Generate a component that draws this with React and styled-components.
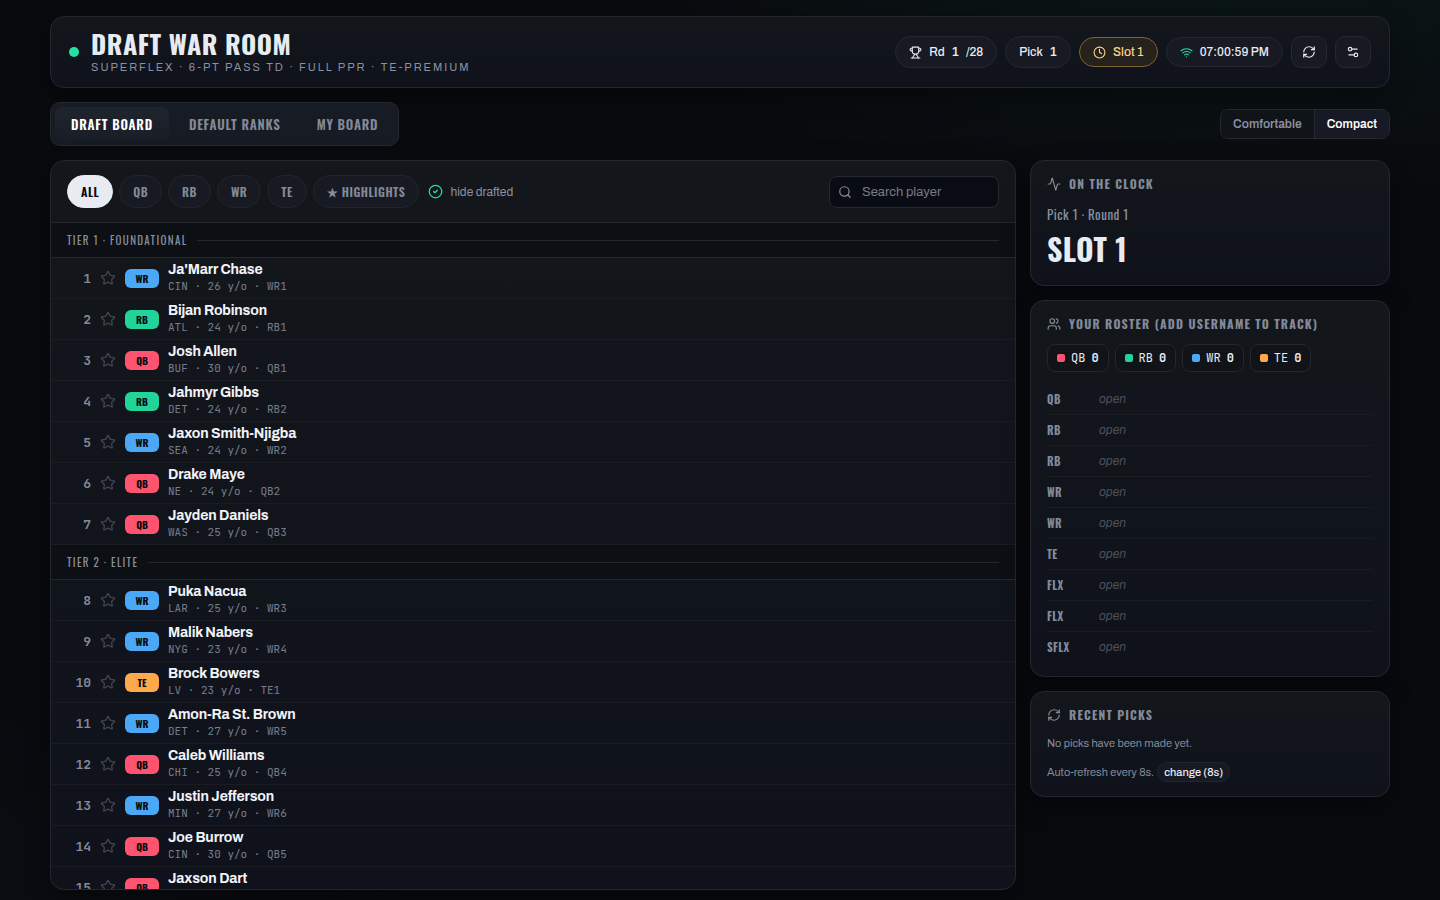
import React from "react";
import styled, { createGlobalStyle } from "styled-components";
import { Trophy, Clock, Wifi, RefreshCw, Settings2, CircleCheck, Search, Activity, Users, Star } from "lucide-react";

const display = '"Oswald", "Roboto Condensed", "Liberation Sans Narrow", sans-serif';
const body = '"Archivo", "Liberation Sans", sans-serif';
const mono = '"JetBrains Mono", "Liberation Mono", monospace';

const colors = { QB: "#ff5470", RB: "#22d39a", WR: "#4aa8f7", TE: "#ffa94d" };

const GlobalStyle = createGlobalStyle`
  * { box-sizing: border-box; }
  html { background: #090a0e; }
  body {
    margin: 0;
    min-height: 100vh;
    color: #e8ebf2;
    font-family: ${body};
    font-size: 14px;
    background:
      radial-gradient(1100px 500px at 85% -10%, rgba(34, 211, 154, 0.08), transparent 60%),
      radial-gradient(900px 500px at -5% 110%, rgba(34, 150, 180, 0.03), transparent 60%),
      #090a0e;
  }
  button, input { font: inherit; color: inherit; }
  button { cursor: pointer; }
  h1, h2, p, ul { margin: 0; padding: 0; }
  ul { list-style: none; }
`;

const Page = styled.div`
  display: flex;
  flex-direction: column;
  gap: 14px;
  padding: 16px 50px 10px;
`;

const Panel = styled.section`
  border: 1px solid #24282e;
  border-radius: 14px;
  background: linear-gradient(180deg, #13171b, #0f121b);
  box-shadow: 0 8px 24px rgba(0, 0, 0, 0.4);
`;

const Header = styled(Panel).attrs({ as: "header" })`
  display: flex;
  align-items: center;
  justify-content: space-between;
  height: 72px;
  padding: 0 18px;
`;

const Brand = styled.div`
  display: flex;
  align-items: center;
  gap: 12px;
`;

const Dot = styled.span`
  width: 10px;
  height: 10px;
  border-radius: 50%;
  background: #27e0a3;
`;

const Title = styled.h1`
  font: 700 26px/30px ${display};
  letter-spacing: 0.02em;
`;

const Subtitle = styled.p`
  font-size: 11px;
  line-height: 16px;
  letter-spacing: 0.18em;
  color: #8a90a0;
`;

const Row = styled.div`
  display: flex;
  align-items: center;
  gap: 8px;
`;

const Chip = styled.span`
  display: flex;
  align-items: center;
  gap: 7px;
  height: ${(p) => (p.$tall ? 32 : 30)}px;
  padding: 0 13px;
  border: 1px solid ${(p) => (p.$gold ? "#80652f" : "#24272f")};
  border-radius: 16px;
  background: ${(p) => (p.$gold ? "#25211c" : "#171a23")};
  color: ${(p) => (p.$gold ? "#ffd58a" : "#e8ebf2")};
  font-size: 12px;
  font-weight: 500;
  white-space: nowrap;
  b { font: 700 12px/16px ${mono}; }
`;

const IconButton = styled.button`
  display: grid;
  place-items: center;
  width: 36px;
  height: 32px;
  padding: 0;
  border: 1px solid #24272f;
  border-radius: 10px;
  background: #171a23;
`;

const Bar = styled.div`
  display: flex;
  align-items: center;
  justify-content: space-between;
`;

const Tabs = styled.nav`
  display: flex;
  gap: 4px;
  height: 44px;
  padding: 4px;
  border: 1px solid #24282f;
  border-radius: 10px;
  background: #171b24;
`;

const Tab = styled.button`
  padding: 0 16px;
  border: 0;
  border-radius: 8px;
  background: ${(p) => (p.$active ? "linear-gradient(180deg, #20242e, #191d26)" : "none")};
  color: ${(p) => (p.$active ? "#ffffff" : "#848a99")};
  font: 600 13px/20px ${display};
  letter-spacing: 0.06em;
`;

const Segments = styled.div`
  display: flex;
  height: 30px;
  border: 1px solid #24282f;
  border-radius: 8px;
  overflow: hidden;
`;

const Segment = styled.button`
  padding: 0 12px;
  border: 0;
  background: ${(p) => (p.$active ? "#171a24" : "#101318")};
  color: ${(p) => (p.$active ? "#ffffff" : "#8a90a0")};
  font-size: 12px;
  font-weight: 600;
  & + & { border-left: 1px solid #24282f; }
`;

const Columns = styled.main`
  display: grid;
  grid-template-columns: minmax(0, 1fr) 360px;
  align-items: start;
  gap: 14px;
`;

const Board = styled(Panel)`
  display: flex;
  flex-direction: column;
  height: calc(100vh - 170px);
  overflow: hidden;
`;

const Toolbar = styled.div`
  display: flex;
  align-items: center;
  justify-content: space-between;
  flex: none;
  padding: 14px 16px;
  border-bottom: 1px solid #24282e;
`;

const Filters = styled.div`
  display: flex;
  align-items: center;
  gap: 6px;
`;

const Filter = styled.button`
  height: 33px;
  padding: 0 13px;
  border: 1px solid ${(p) => (p.$active ? "#e8ebf2" : "#22252e")};
  border-radius: 17px;
  background: ${(p) => (p.$active ? "#e8ebf2" : "#171a23")};
  color: ${(p) => (p.$active ? "#08090d" : "#848a99")};
  font: 600 12px/20px ${display};
  letter-spacing: 0.04em;
`;

const Toggle = styled.button`
  display: flex;
  align-items: center;
  gap: 7px;
  margin-left: 3px;
  padding: 0;
  border: 0;
  background: none;
  color: #8a90a0;
  font-size: 12px;
  svg { color: #27e0a3; }
`;

const SearchBox = styled.label`
  display: flex;
  align-items: center;
  gap: 10px;
  width: 170px;
  height: 32px;
  padding: 0 8px;
  border: 1px solid #24282f;
  border-radius: 8px;
  background: #090c12;
  color: #8a90a0;
  svg { flex: none; }
`;

const SearchInput = styled.input`
  width: 100%;
  min-width: 0;
  padding: 0;
  border: 0;
  outline: 0;
  background: none;
  font-size: 13px;
  &::placeholder { color: #767b86; opacity: 1; }
`;

const List = styled.div`
  flex: 1;
  min-height: 0;
  overflow-y: auto;
  scrollbar-width: none;
`;

const Tier = styled.h2`
  display: flex;
  align-items: center;
  gap: 10px;
  height: 35px;
  padding: 0 16px;
  border-bottom: 1px solid #24282e;
  background: #0c0f13;
  color: #8a90a0;
  font: 400 11px/18px ${display};
  letter-spacing: 0.12em;
  &::after {
    content: "";
    flex: 1;
    height: 1px;
    background: #24282e;
  }
`;

const Player = styled.li`
  display: grid;
  grid-template-columns: 24px 16px 34px minmax(0, 1fr);
  align-items: center;
  column-gap: 9px;
  height: 41px;
  padding: 0 16px;
  border-bottom: 1px solid #191d22;
`;

const Rank = styled.span`
  padding-top: 2px;
  color: #848a99;
  font: 600 13px/18px ${mono};
  text-align: right;
`;

const StarButton = styled.button`
  display: grid;
  padding: 0;
  border: 0;
  background: none;
  color: #40444e;
`;

const Badge = styled.span`
  height: 19px;
  border-radius: 6px;
  background: ${(p) => colors[p.$pos]};
  color: #08090d;
  font: 700 10px/19px ${display};
  text-align: center;
`;

const Name = styled.div`
  color: #f1f3f8;
  font-size: 14px;
  font-weight: 700;
  line-height: 16px;
  letter-spacing: -0.01em;
`;

const Meta = styled.div`
  color: #777d8b;
  font: 400 11px/16px ${mono};
`;

const Side = styled.aside`
  display: flex;
  flex-direction: column;
  gap: 14px;
`;

const Card = styled(Panel)`
  padding: 14px 16px;
`;

const CardTitle = styled.h2`
  display: flex;
  align-items: center;
  gap: 8px;
  color: #848a99;
  font: 700 12px/18px ${display};
  letter-spacing: 0.1em;
`;

const ClockLine = styled.p`
  margin-top: 11px;
  color: #8a90a0;
  font: 400 13px/20px ${display};
  letter-spacing: 0.04em;
`;

const ClockSlot = styled.p`
  margin: 7px 0 4px;
  font: 700 30px/36px ${display};
  letter-spacing: 0.01em;
`;

const Counts = styled.ul`
  display: flex;
  gap: 6px;
  margin: 11px 0 12px;
`;

const Count = styled.li`
  display: flex;
  align-items: center;
  gap: 6px;
  height: 28px;
  padding: 0 9px;
  border: 1px solid #24282e;
  border-radius: 8px;
  background: #101318;
  font: 400 12px/16px ${mono};
  &::before {
    content: "";
    width: 8px;
    height: 8px;
    border-radius: 2px;
    background: ${(p) => colors[p.$pos]};
  }
  b { font-weight: 700; }
`;

const Slot = styled.li`
  display: grid;
  grid-template-columns: 44px 1fr;
  align-items: center;
  gap: 8px;
  height: 31px;
  border-bottom: 1px solid #191d22;
  &:last-child { height: 30px; border: 0; }
`;

const SlotName = styled.span`
  color: #848a99;
  font: 700 11px/16px ${display};
  letter-spacing: 0.04em;
`;

const Open = styled.em`
  color: #4b505b;
  font-size: 12px;
`;

const Note = styled.p`
  display: flex;
  align-items: center;
  gap: 3px;
  height: 20px;
  margin-top: 9px;
  color: #848a99;
  font-size: 11px;
`;

const NoteButton = styled.button`
  height: 20px;
  padding: 0 6px;
  border: 1px solid #22252e;
  border-radius: 10px;
  background: #171a23;
  color: #e8ebf2;
  font-size: 11px;
  font-weight: 500;
`;

const tiers = [
  ["TIER 1 · FOUNDATIONAL", [
    ["WR", "Ja'Marr Chase", "CIN · 26 y/o · WR1"],
    ["RB", "Bijan Robinson", "ATL · 24 y/o · RB1"],
    ["QB", "Josh Allen", "BUF · 30 y/o · QB1"],
    ["RB", "Jahmyr Gibbs", "DET · 24 y/o · RB2"],
    ["WR", "Jaxon Smith-Njigba", "SEA · 24 y/o · WR2"],
    ["QB", "Drake Maye", "NE · 24 y/o · QB2"],
    ["QB", "Jayden Daniels", "WAS · 25 y/o · QB3"],
  ]],
  ["TIER 2 · ELITE", [
    ["WR", "Puka Nacua", "LAR · 25 y/o · WR3"],
    ["WR", "Malik Nabers", "NYG · 23 y/o · WR4"],
    ["TE", "Brock Bowers", "LV · 23 y/o · TE1"],
    ["WR", "Amon-Ra St. Brown", "DET · 27 y/o · WR5"],
    ["QB", "Caleb Williams", "CHI · 25 y/o · QB4"],
    ["WR", "Justin Jefferson", "MIN · 27 y/o · WR6"],
    ["QB", "Joe Burrow", "CIN · 30 y/o · QB5"],
    ["QB", "Jaxson Dart", "NYG · 23 y/o · QB6"],
  ]],
];

const filters = ["ALL", "QB", "RB", "WR", "TE", "★ HIGHLIGHTS"];
const slots = ["QB", "RB", "RB", "WR", "WR", "TE", "FLX", "FLX", "SFLX"];

export default function App() {
  return (
    <Page>
      <GlobalStyle />
      <Header>
        <Brand>
          <Dot />
          <div>
            <Title>DRAFT WAR ROOM</Title>
            <Subtitle>SUPERFLEX · 6-PT PASS TD · FULL PPR · TE-PREMIUM</Subtitle>
          </div>
        </Brand>
        <Row>
          <Chip $tall><Trophy size={13} /><span>Rd</span><b>1</b><span>/28</span></Chip>
          <Chip $tall><span>Pick</span><b>1</b></Chip>
          <Chip $gold><Clock size={13} />Slot 1</Chip>
          <Chip><Wifi size={13} color="#27e0a3" />07:00:59 PM</Chip>
          <IconButton aria-label="Refresh"><RefreshCw size={14} /></IconButton>
          <IconButton aria-label="Settings"><Settings2 size={14} /></IconButton>
        </Row>
      </Header>

      <Bar>
        <Tabs>
          <Tab $active>DRAFT BOARD</Tab>
          <Tab>DEFAULT RANKS</Tab>
          <Tab>MY BOARD</Tab>
        </Tabs>
        <Segments>
          <Segment>Comfortable</Segment>
          <Segment $active>Compact</Segment>
        </Segments>
      </Bar>

      <Columns>
        <Board>
          <Toolbar>
            <Filters>
              {filters.map((f, i) => <Filter key={f} $active={i === 0}>{f}</Filter>)}
              <Toggle aria-pressed="true"><CircleCheck size={15} />hide drafted</Toggle>
            </Filters>
            <SearchBox>
              <Search size={14} />
              <SearchInput placeholder="Search player" aria-label="Search player" />
            </SearchBox>
          </Toolbar>
          <List>
            {tiers.map(([title, players], t) => (
              <section key={title}>
                <Tier>{title}</Tier>
                <ul>
                  {players.map(([pos, name, meta], i) => (
                    <Player key={name}>
                      <Rank>{t * 7 + i + 1}</Rank>
                      <StarButton aria-label={`Highlight ${name}`}><Star size={16} strokeWidth={2} /></StarButton>
                      <Badge $pos={pos}>{pos}</Badge>
                      <div>
                        <Name>{name}</Name>
                        <Meta>{meta}</Meta>
                      </div>
                    </Player>
                  ))}
                </ul>
              </section>
            ))}
          </List>
        </Board>

        <Side>
          <Card>
            <CardTitle><Activity size={14} />ON THE CLOCK</CardTitle>
            <ClockLine>Pick 1 · Round 1</ClockLine>
            <ClockSlot>SLOT 1</ClockSlot>
          </Card>
          <Card>
            <CardTitle><Users size={14} />YOUR ROSTER (ADD USERNAME TO TRACK)</CardTitle>
            <Counts>
              {Object.keys(colors).map((pos) => (
                <Count key={pos} $pos={pos}><span>{pos}</span><b>0</b></Count>
              ))}
            </Counts>
            <ul>
              {slots.map((s, i) => (
                <Slot key={i}><SlotName>{s}</SlotName><Open>open</Open></Slot>
              ))}
            </ul>
          </Card>
          <Card>
            <CardTitle><RefreshCw size={14} />RECENT PICKS</CardTitle>
            <Note>No picks have been made yet.</Note>
            <Note>Auto-refresh every 8s. <NoteButton>change (8s)</NoteButton></Note>
          </Card>
        </Side>
      </Columns>
    </Page>
  );
}
